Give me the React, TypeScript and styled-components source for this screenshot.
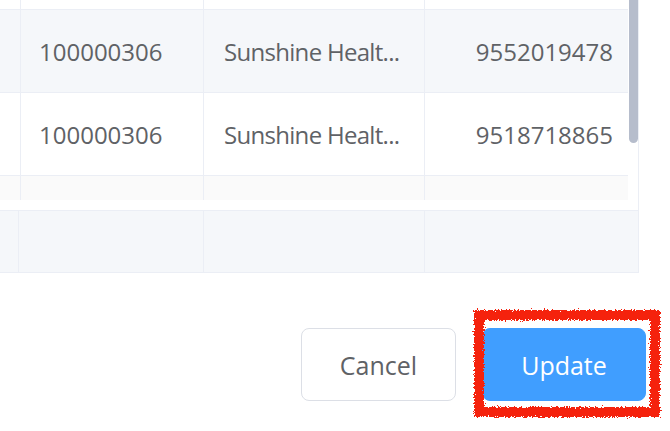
import React from "react";
import styled, { createGlobalStyle } from "styled-components";

const Global = createGlobalStyle`
  html, body { margin: 0; padding: 0; background: #ffffff; }
  body { font-family: "Open Sans", "Noto Sans", sans-serif; color: #606266; }
  * { box-sizing: border-box; }
`;

const Page = styled.div`
  width: 670px;
  height: 431px;
  overflow: hidden;
  display: flex;
  flex-direction: column;
`;

const TableFrame = styled.div`
  width: 639px;
  border-right: 1px solid #ebeef5;
  border-bottom: 1px solid #ebeef5;
  display: flex;
  flex-direction: column;
`;

const BodyArea = styled.div`
  display: grid;
  grid-template-columns: 628px 10px;
  grid-template-rows: 200px 10px;
`;

const Viewport = styled.div`
  overflow: hidden;
  display: flex;
  flex-direction: column;
`;

const VTrack = styled.div`
  grid-column: 2;
  grid-row: 1 / span 2;
  display: flex;
  flex-direction: column;
`;

const Thumb = styled.div`
  height: 143px;
  background: #b6bdcc;
  border-radius: 0 0 5px 5px;
  margin-left: 1px;
`;

const Row = styled.div<{ $h: number; $bg: string }>`
  flex: none;
  height: ${(p) => p.$h}px;
  background: ${(p) => p.$bg};
  border-bottom: 1px solid #ebeef5;
  display: grid;
  grid-template-columns: 19px 185px 221px 1fr;
`;

const Cell = styled.div<{ $align?: "left" | "right"; $tight?: boolean }>`
  border-right: 1px solid #ebeef5;
  display: flex;
  align-items: center;
  justify-content: ${(p) => (p.$align === "right" ? "flex-end" : "flex-start")};
  padding: ${(p) => (p.$align === "right" ? "0 15px 0 0" : "0 0 0 20px")};
  font-size: 24px;
  letter-spacing: ${(p) => (p.$tight ? "-0.7px" : "0")};
  color: #5f6266;
  white-space: nowrap;
  overflow: hidden;
  &:last-child { border-right: none; }
`;

const FooterRow = styled.div`
  height: 62px;
  background: #f5f7fa;
  border-top: 1px solid #ebeef5;
  display: grid;
  grid-template-columns: 19px 185px 221px 1fr;
`;

const FooterCell = styled.div`
  border-right: 1px solid #ebeef5;
  &:last-child { border-right: none; }
`;

const Actions = styled.div`
  display: flex;
  justify-content: flex-end;
  gap: 26px;
  padding: 55px 24px 0 0;
`;

const Button = styled.button<{ $primary?: boolean }>`
  width: ${(p) => (p.$primary ? 164 : 155)}px;
  height: 73px;
  border-radius: 8px;
  border: 1px solid ${(p) => (p.$primary ? "#409eff" : "#dcdfe6")};
  background: ${(p) => (p.$primary ? "#409eff" : "#ffffff")};
  color: ${(p) => (p.$primary ? "#ffffff" : "#5f6266")};
  font-family: "Open Sans", "Noto Sans", sans-serif;
  font-size: 25px;
  padding: 0;
  cursor: pointer;
`;

const Highlight = styled.div`
  position: relative;
`;

const Scribble = styled.div`
  position: absolute;
  left: -8px;
  right: -14px;
  top: -18px;
  bottom: -16px;
  border: 10px solid #f52410;
  filter: url(#rough);
  pointer-events: none;
`;

const rows = [
  { id: "100000306", name: "Sunshine Healt...", phone: "9552019478", bg: "#f5f7fa" },
  { id: "100000306", name: "Sunshine Healt...", phone: "9518718865", bg: "#ffffff" },
];

export default function App() {
  return (
    <Page>
      <Global />
      <svg width="0" height="0" style={{ position: "absolute" }}>
        <filter id="rough">
          <feTurbulence type="fractalNoise" baseFrequency="0.7" numOctaves="2" result="n" />
          <feDisplacementMap in="SourceGraphic" in2="n" scale="6" />
        </filter>
      </svg>
      <TableFrame>
        <BodyArea>
          <Viewport>
            <Row $h={10} $bg="#ffffff">
              <Cell />
              <Cell />
              <Cell />
              <Cell />
            </Row>
            {rows.map((r, i) => (
              <Row key={i} $h={83} $bg={r.bg}>
                <Cell />
                <Cell>{r.id}</Cell>
                <Cell $tight>{r.name}</Cell>
                <Cell $align="right">{r.phone}</Cell>
              </Row>
            ))}
            <Row $h={83} $bg="#fafafa">
              <Cell />
              <Cell />
              <Cell />
              <Cell />
            </Row>
          </Viewport>
          <VTrack>
            <Thumb />
          </VTrack>
        </BodyArea>
        <FooterRow>
          <FooterCell />
          <FooterCell />
          <FooterCell />
          <FooterCell />
        </FooterRow>
      </TableFrame>
      <Actions>
        <Button>Cancel</Button>
        <Highlight>
          <Button $primary>Update</Button>
          <Scribble />
        </Highlight>
      </Actions>
    </Page>
  );
}
